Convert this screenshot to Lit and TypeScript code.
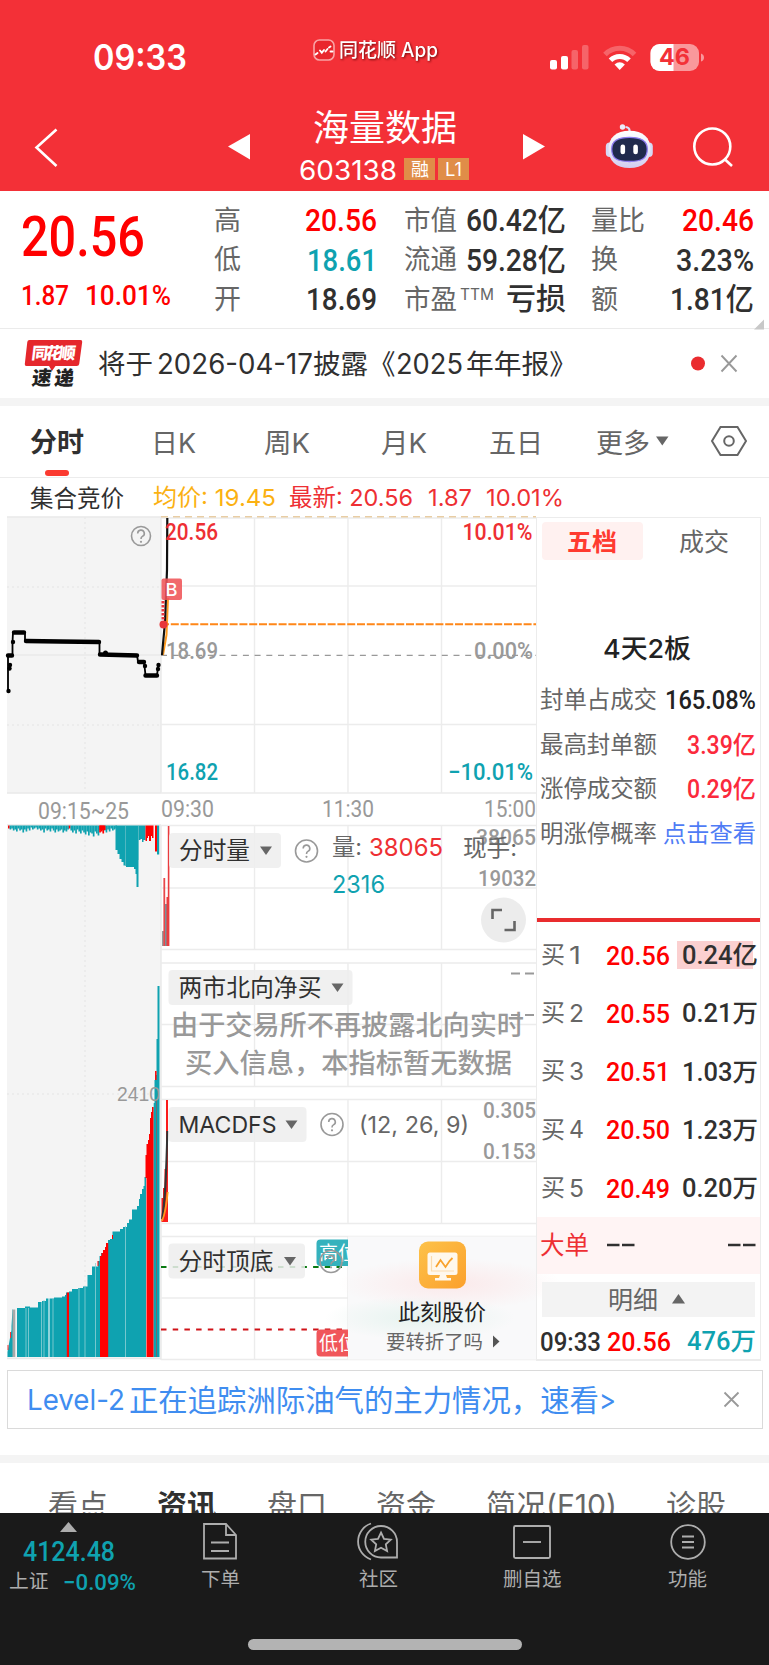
import { LitElement, html, svg, css } from "lit";
import { customElement } from "lit/decorators.js";

// One line of text set to an exact advance width, centred on its own box.
const t = (s: string, size: number, w: number, cls = "") => html`
  <svg class="t ${cls}" width=${w} height=${size} font-size=${size}>
    <text y=${size * 0.87} textLength=${w} lengthAdjust="spacingAndGlyphs">${s}</text>
  </svg>`;

// The same inside a chart: x is the left ink edge, cy the vertical middle.
const st = (s: string, x: number, cy: number, w: number, size: number, cls = "") => svg`
  <text class=${cls} x=${x - 1} y=${cy + size * 0.36} font-size=${size} textLength=${w + 2} lengthAdjust="spacingAndGlyphs">${s}</text>`;

const RED = "#ee2f33";
const TEAL = "#0fa2b0";

const help = (cx: number, cy: number, r: number) => svg`
  <circle cx=${cx} cy=${cy} r=${r} fill="none" stroke="#999" stroke-width="1.6"/>
  <path d="M${cx - 3.3} ${cy - 2.6}a3.3 3.3 0 1 1 4.7 3q-1.4 .7 -1.4 2.5" fill="none" stroke="#999" stroke-width="1.6"/>
  <circle cx=${cx} cy=${cy + 5.8} r="1.1" fill="#999"/>`;

const chip = (x: number, y: number, w: number, label: string, tw: number) => svg`
  <rect x=${x} y=${y} width=${w} height="35" rx="4" fill="#eeeeee" fill-opacity=".86"/>
  ${st(label, x + 11, y + 17.8, tw, 23.5, "ink")}
  <path d="M${x + w - 21} ${y + 13.5}h12l-6 8.500z" fill="#666"/>`;

const cols = [254.5, 348, 441.5];
const grid = (top: number, mids: number[], bottom: number) => svg`
  <g stroke="#ececec" stroke-width="1.4" fill="none">
    <path d="M161 ${top}H536M161 ${bottom}H536"/>
    ${mids.map((m) => svg`<path d="M161 ${m}H536"/>`)}
    ${cols.map((c) => svg`<path d="M${c} ${top}V${bottom}"/>`)}
  </g>`;

const steps: [number, number][] = [
  [17, 1308], [25, 1306.5], [30, 1307.5], [38, 1302], [42, 1301], [46, 1298.5], [54, 1297.5], [62, 1296.5], [65, 1295],
  [66, 1292.5], [69, 1291.5], [72, 1289], [78, 1288], [83, 1286.5], [87.5, 1275], [92, 1266.5], [98, 1261], [99.5, 1256],
  [101, 1253], [103, 1250], [105, 1247], [106, 1243], [108, 1240], [110, 1239], [112.5, 1231.5], [120, 1229], [123, 1227],
  [127, 1223], [129, 1219.5], [132, 1209.5], [137, 1206], [139, 1199], [140, 1194], [142, 1189], [143.5, 1186], [144.5, 1177],
];
const down = [
  3, 4, 3, 5, 4, 6, 3, 5, 4, 7, 4, 6, 3, 5, 2, 4, 3, 2, 4, 3, 5, 4, 7, 3, 5, 4, 6, 3, 5, 7, 4, 6, 5, 4, 7, 5, 6, 4, 3, 5, 7, 5, 8, 4, 6,
  8, 5, 7, 9, 6, 10, 7, 8, 11, 6, 8, 10, 7, 6, 8, 5, 7, 4, 6, 3, 5, 4, 3,
];
const stepPath = steps.map(([x, y], i) => `${i ? "V" + y : "M17 1357V" + y}H${steps[i + 1]?.[0] ?? 146}`).join("") + "V1357Z";

@customElement("app-root")
export class AppRoot extends LitElement {
  static styles = css`
    :host { display: block; width: 769px; height: 1665px; overflow: hidden; background: #fff; color: #303030; font-family: Inter, "Noto Sans CJK SC", sans-serif; }
    * { box-sizing: border-box; }
    svg { display: block; flex: none; overflow: visible; }
    .t text, .plot text { fill: currentColor; }
    .din { font-family: Roboto, "Noto Sans CJK SC", sans-serif; font-weight: 500; }
    .dinr { font-family: Roboto, "Noto Sans CJK SC", sans-serif; font-weight: 400; }
    .b { font-weight: 700; } .m { font-weight: 500; } .sb { font-weight: 600; }
    .red { color: #ff0000; } .up { color: #ee2f33; } .teal { color: #0fa2b0; } .gray { color: #666; } .lt { color: #999; }
    .yel { color: #fbb112; } .ink { color: #303030; } .black { color: #222; } .hot { color: #ff3b30; } .rose { color: #fb2a3c; } .link { color: #4f7cf5; } .white { color: #fff; }
    .row { display: flex; align-items: center; }

    header { height: 191px; background: #f33037; color: #fff; }
    .status { display: flex; height: 103px; padding: 37px 64px 0 93px; }
    .status .clock { width: 220px; padding-top: 3px; }
    .status .brand { display: flex; gap: 4px; width: 236px; height: 25px; align-items: center; }
    .brand .t { filter: drop-shadow(1px 1px 1px rgba(90,0,0,.8)); }
    .nav { display: flex; height: 88px; }
    .nav .mid { width: 274px; }
    .title { display: flex; justify-content: center; padding: 7px 3px 0 0; }
    .code { display: flex; align-items: center; gap: 3px; padding: 9px 0 0 50px; }
    .code > .t { margin-top: 2px; }
    .tag { display: flex; align-items: center; justify-content: center; width: 31px; height: 22px; background: #e08d48; }
    .code .tag:first-of-type { margin-left: 4px; }

    .quote { display: grid; grid-template-columns: 214px 190px 187px 178px; height: 138px; border-bottom: 1.5px solid #ebebeb; }
    .price { padding: 17px 0 0 21px; }
    .chg { display: flex; gap: 16px; margin-top: 17px; }
    .kv { padding-top: 9px; }
    .kv .row { height: 39.3px; justify-content: space-between; }
    .k1 { padding-right: 27px; } .k2 { padding-right: 25px; } .k3 { padding-right: 15px; }
    .k2 .ttm { margin: -9px auto 0 3px; }
    .fold { display: flex; justify-content: flex-end; margin-top: -4px; margin-right: -10px; height: 10px; }
    .news { display: flex; align-items: center; height: 69px; padding-left: 24px; }
    .band { height: 8px; background: #f4f4f4; }
    .tabs { display: flex; align-items: center; height: 72px; padding-left: 30px; border-bottom: 1.5px solid #ececec; }
    .tab { display: flex; align-items: center; height: 72px; margin-top: 1px; }
    .on { flex-direction: column; }
    .on .t { margin-top: 22px; }
    .bar { width: 24px; height: 6px; border-radius: 3px; background: #fb3a30; margin-top: 15px; }
    .info { display: flex; align-items: center; height: 39px; padding-left: 30px; }
    .info .t:first-child { margin-top: 3px; }
    .main { display: grid; grid-template-columns: 536px 225px; height: 844px; }
    .book { border: 1.5px solid #ececec; border-bottom-width: 2px; height: 844px; }
    .seg { display: flex; padding: 4px 0 0 5px; height: 109px; }
    .seg .act { display: flex; align-items: center; justify-content: center; width: 101px; height: 38px; border-radius: 4px; background: #fff1f0; }
    .seg .off { display: flex; align-items: center; justify-content: center; width: 113px; height: 38px; margin-left: 5px; }
    .streak { display: flex; justify-content: center; padding: 8px 4px 0 0; height: 50px; }
    .stat { display: flex; align-items: center; justify-content: space-between; height: 44.8px; padding: 0 4px 0 3px; }
    .rule { height: 3.5px; background: #e92c2e; margin-top: 62px; }
    .lvls { padding-top: 4px; }
    .lvl { display: grid; grid-template-columns: 65px 71px 81px; align-items: center; height: 58.2px; padding-left: 4px; }
    .vol { display: flex; align-items: center; justify-content: flex-end; height: 28px; }
    .vol.hit { background: linear-gradient(90deg, #fbd0d0 76px, transparent 76px); }
    .big { display: flex; align-items: center; height: 57px; padding: 0 4px 0 3px; background: #fff4f4; }
    .big .grow { margin-left: auto; }
    .more { display: flex; align-items: center; gap: 14px; height: 35px; margin: 8px 5px 0; padding-left: 66px; background: #f3f3f3; }
    .tick { display: flex; align-items: center; height: 48px; padding: 0 4px 0 3px; gap: 6px; }
    .tick .grow { margin-left: auto; }
    .ad { display: flex; align-items: center; justify-content: space-between; width: 756px; height: 59px; margin: 9px 0 0 7px; padding: 0 22px 0 19px; border: 1.5px solid #dadada; }
    .gap { height: 26px; }
    .tabs2 { display: flex; height: 49.5px; padding: 26.5px 43px 0 48px; justify-content: space-between; overflow: hidden; }
    footer { height: 153.5px; background: #1a1a1a; color: #adadad; }
    .menu { display: grid; grid-template-columns: 142px 156px 160px 148px 163px; height: 126.5px; }
    .cell { display: flex; flex-direction: column; align-items: center; padding-top: 9px; }
    .cell .t { margin-top: 9px; }
    .idx { display: flex; flex-direction: column; padding: 9px 0 0 9px; }
    .home { width: 274px; height: 11px; border-radius: 6px; background: #b3b3b3; margin-left: 248px; }
  `;

  private header() {
    return html`<header>
      <div class="status">
        <div class="clock">${t("09:33", 35, 94, "sb")}</div>
        <div class="brand">
          <svg width="22" height="22" viewBox="0 0 22 22"><rect x="1" y="1" width="20" height="20" rx="5.5" fill="#e9262d" stroke="#f9a3a5" stroke-width="1.6"/><path d="M2.500 15.500l2-1.500M7 11.500l1.800 2.200L11 11M12.500 12.500l2-2.500M16 8.500l1.500-1M17.500 12.500h2" stroke="#fff" stroke-width="1.900" fill="none" stroke-linecap="round"/></svg>
          ${t("同花顺 App", 19.5, 99, "m")}
        </div>
        <svg width="156" height="36" viewBox="550 37 156 36">
          <g fill="#fff"><rect x="551" y="60" width="7" height="9.5" rx="2"/><rect x="562" y="56" width="7" height="13.5" rx="2"/><rect x="572.5" y="50" width="6.5" height="19.5" rx="2" opacity=".25"/><rect x="583" y="45" width="6.5" height="24.500" rx="2" opacity=".25"/></g>
          <g fill="none" stroke="#fff" stroke-width="5"><path d="M606 54.500a20.500 20.500 0 0 1 29.500 0" opacity=".25"/><path d="M611.500 60.300a13 13 0 0 1 18.500 0"/></g>
          <path d="M615.500 64.500q5.200-4.500 10.400 0L620.700 70z" fill="#fff"/>
          <clipPath id="lv"><rect x="651" y="43" width="23.500" height="29"/></clipPath>
          <rect x="651.500" y="44" width="48.500" height="27" rx="9" fill="#fff" opacity=".5"/>
          <rect x="651.500" y="44" width="48.500" height="27" rx="9" fill="#fff" clip-path="url(#lv)"/>
          <path d="M702 53.500q3 1 3 4t-3 4z" fill="#fff" opacity=".5"/>
          <g fill="#f33037" class="b">${svg`<text x="660" y="65" font-size="22.500" textLength="31" lengthAdjust="spacingAndGlyphs">46</text>`}</g>
        </svg>
      </div>
      <div class="nav">
        <svg width="249" height="88" viewBox="0 103 249 88"><path d="M56.500 129.500L36.500 147.500L56.500 166" fill="none" stroke="#fff" stroke-width="2.600"/><path d="M228 146.500L250 134V159.500z" fill="#fff"/></svg>
        <div class="mid">
          <div class="title">${t("海量数据", 36, 144)}</div>
          <div class="code">${t("603138", 26.5, 98)}<span class="tag">${t("融", 18, 18)}</span><span class="tag">${t("L1", 18, 17)}</span></div>
        </div>
        <svg width="246" height="88" viewBox="523 103 246 88">
          <defs><linearGradient id="hd" x2="0" y2="1"><stop offset="0" stop-color="#fff"/><stop offset=".6" stop-color="#e4e4f6"/><stop offset="1" stop-color="#d3cdf0"/></linearGradient></defs>
          <path d="M523 134V159.500L545 146.500z" fill="#fff"/>
          <path d="M629.500 132v-1.500q0-3-4-3.500" fill="none" stroke="#dcdffa" stroke-width="2.200"/><circle cx="622.500" cy="127" r="2.700" fill="#ecebfa"/>
          <rect x="605.800" y="142.500" width="8" height="14.500" rx="4" fill="#d6d9f5"/><rect x="644.800" y="142.500" width="8" height="14.500" rx="4" fill="#d6d9f5"/>
          <path d="M629.500 130.800C643 130.800 650.500 138 650.500 149C650.500 161 643 168 629.500 168C616 168 608.500 161 608.500 149C608.500 138 616 130.800 629.500 130.800z" fill="url(#hd)"/>
          <path d="M629.500 137.300C641 137.300 647.300 140.500 647.300 149C647.300 158.500 642 161.500 629.500 161.500C617 161.500 611.700 158.500 611.700 149C611.700 140.500 618 137.300 629.500 137.300z" fill="#202a4c" stroke="#8d7cf0" stroke-width="1.300"/>
          <g fill="#fff"><rect x="620.500" y="144.500" width="4.600" height="9.800" rx="2.300"/><rect x="633.300" y="144.500" width="4.600" height="9.800" rx="2.300"/></g>
          <g fill="none" stroke="#fff" stroke-width="2.600"><circle cx="712.300" cy="146.500" r="18"/><path d="M724.500 159l7.500 7"/></g>
        </svg>
      </div>
    </header>`;
  }

  private quote() {
    return html`<section class="quote">
      <div class="price red">${t("20.56", 55.5, 124, "din")}<div class="chg">${t("1.87", 28, 48, "din")}${t("10.01%", 28, 86, "din")}</div></div>
      <div class="kv k1">
        <div class="row">${t("高", 27, 27, "gray")}${t("20.56", 30.5, 72, "din red")}</div>
        <div class="row">${t("低", 27, 27, "gray")}${t("18.61", 30.5, 70, "din teal")}</div>
        <div class="row">${t("开", 27, 27, "gray")}${t("18.69", 30.5, 71, "din")}</div>
      </div>
      <div class="kv k2">
        <div class="row">${t("市值", 27, 53, "gray")}${t("60.42亿", 30.5, 100, "din")}</div>
        <div class="row">${t("流通", 27, 53, "gray")}${t("59.28亿", 30.5, 100, "din")}</div>
        <div class="row">${t("市盈", 27, 53, "gray")}<span class="ttm">${t("TTM", 15.5, 34, "gray")}</span>${t("亏损", 30, 60, "m")}</div>
      </div>
      <div class="kv k3">
        <div class="row">${t("量比", 27, 54, "gray")}${t("20.46", 30.5, 72, "din red")}</div>
        <div class="row">${t("换", 27, 27, "gray")}${t("3.23%", 30.5, 78, "din")}</div>
        <div class="row">${t("额", 27, 27, "gray")}${t("1.81亿", 30.5, 84, "din")}</div>
        <div class="fold"><svg width="10" height="16"><path d="M10 5.500V15.500H0z" fill="#c8c8c8"/></svg></div>
      </div>
    </section>`;
  }

  private news() {
    return html`<section class="news">
      <svg width="74" height="50" viewBox="0 0 73 50">
        <path d="M5 1h51q2 0 1.700 2l-3 22q-.3 2-2.500 2H31l-3.500 5-3-5H2q-2 0-1.700-2l2.500-22Q3 1 5 1z" fill="#e5272c"/>
        <g transform="skewX(-7)" font-weight="900" font-family="Noto Sans CJK SC">
          <text x="9" y="20" font-size="16.500" textLength="44" fill="#fff">同花顺</text>
          <text x="12.500" y="46" font-size="19.500" textLength="42" fill="#222">速递</text>
        </g>
      </svg>
      ${t("将于", 27.5, 55)}<span style="width:4px"></span>${t("2026-04-17", 28, 156)}${t("披露", 27.5, 55)}${t("《", 27.5, 27.5)}${t("2025", 28, 67)}<span style="width:3px"></span>${t("年年报》", 27.5, 111)}
      <svg width="170" height="20"><circle cx="121" cy="9.500" r="7" fill="#ea2c2f"/><path d="M144.500 1.500l15 16M159.500 1.500L144.500 17.500" stroke="#999" stroke-width="1.900"/></svg>
    </section>`;
  }

  private tabs() {
    const gap = (w: number) => html`<span style="width:${w}px"></span>`;
    return html`<nav class="tabs">
      <div class="tab on">${t("分时", 27, 54, "b")}<div class="bar"></div></div>
      ${gap(67)}<div class="tab gray">${t("日K", 27, 45)}</div>
      ${gap(68)}<div class="tab gray">${t("周K", 27, 46)}</div>
      ${gap(71)}<div class="tab gray">${t("月K", 27, 46)}</div>
      ${gap(62)}<div class="tab gray">${t("五日", 27, 54)}</div>
      ${gap(53)}<div class="tab gray">${t("更多", 27, 54)}</div>
      <svg width="100" height="34"><path d="M6 11.500h12.500l-6.200 9z" fill="#666"/><path d="M70.500 2h17l8.500 14-8.500 14h-17L62 16z" fill="none" stroke="#666" stroke-width="2"/><circle cx="79" cy="16" r="4.800" fill="none" stroke="#666" stroke-width="2"/></svg>
    </nav>
    <div class="info">${t("集合竞价", 23.5, 94)}${gap(29)}${t("均价: 19.45", 23.5, 123, "yel")}${gap(13)}${t("最新: 20.56", 23.5, 124, "up")}${gap(15)}${t("1.87", 23.5, 44, "up")}${gap(14)}${t("10.01%", 23.5, 78, "up")}</div>`;
  }

  private plot() {
    return html`<svg class="plot" width="536" height="844" viewBox="0 517 536 844">
      <defs>
        <radialGradient id="g1"><stop offset="0" stop-color="#fbe9ea"/><stop offset="1" stop-color="#fbe9ea" stop-opacity="0"/></radialGradient>
        <radialGradient id="g2"><stop offset="0" stop-color="#e6f3ef"/><stop offset="1" stop-color="#e6f3ef" stop-opacity="0"/></radialGradient>
        <linearGradient id="g3" x2="1" y2="1"><stop offset="0" stop-color="#fdc249"/><stop offset="1" stop-color="#fba02c"/></linearGradient>
        <clipPath id="left"><rect x="161" y="1236" width="187" height="124"/></clipPath>
      </defs>
      <rect x="7" y="517" width="154" height="276" fill="#f4f4f4"/>
      <rect x="7" y="825" width="154" height="534" fill="#f4f4f4"/>
      <g stroke="#e9e9e9" stroke-width="1.400" fill="none">
        <path d="M85 517V793M7 587H161M7 725H161M85 825V1357M7 1094H161" stroke-dasharray="2 3"/>
        <path d="M7 655H161M7 517H161M7 793H161M7 825H161M7 1358.500H161M161 517V793M161 825V1360"/>
      </g>
      ${grid(518, [586, 724.5], 793)}${grid(825.5, [888], 949.5)}${grid(963, [1024.5], 1086.5)}${grid(1099.5, [1161.5], 1223.5)}${grid(1236.5, [1298], 1359.5)}
      <path d="M161 516.700H536" stroke="#e8cda4" stroke-width="1.400" stroke-dasharray="7 5"/>
      ${help(141, 536, 9.5)}

      <path d="M8 691V668V655H12.500V642L13 632.500H25V641L60 641.500L99.500 642V654H106L137 655L138 661.500H144L145.500 675H157L158.500 664" fill="none" stroke="#000" stroke-width="1.800"/>
      <path d="M14 632.500H24M26 641L60 641.500L99 642M100 654.500L137 655.500M139 662H144M145.500 675.500H157M8 655.500H12" fill="none" stroke="#000" stroke-width="4.400" stroke-linecap="round"/>
      <g><circle cx="8.500" cy="691" r="2.200"/><circle cx="9.500" cy="668.500" r="2.200"/><circle cx="10" cy="665" r="2.200"/><circle cx="13" cy="642" r="2.200"/><circle cx="105.500" cy="653" r="2.500"/><circle cx="145" cy="666" r="2.200"/><circle cx="158" cy="669" r="2.200"/><circle cx="158.500" cy="665" r="2.200"/></g>

      <path d="M161 655.300H536" stroke="#999" stroke-width="1.300" stroke-dasharray="6 5.700"/>
      <path d="M163 655L166.500 635L168 598" fill="none" stroke="#ff9a1e" stroke-width="2"/>
      <path d="M162 655L165 622L167 570L167.300 518" fill="none" stroke="#111" stroke-width="2.200"/>
      <path d="M163 601V620" stroke="#ee3a40" stroke-width="3" stroke-dasharray="2.500 1.500"/>
      <path d="M161 624.300H536" stroke="#ff8718" stroke-width="2" stroke-dasharray="8 1.800"/>
      <circle cx="163.500" cy="624.500" r="4" fill="#e8373a"/>
      <g class="din">
        ${st("20.56", 166, 531.5, 51, 23, "up")}${st("10.01%", 463.5, 531.5, 68, 23, "up")}
        ${st("18.69", 167, 651, 50, 23, "lt")}${st("0.00%", 475, 651, 57, 23, "lt")}
        ${st("16.82", 167, 771.5, 50, 23, "teal")}${st("−10.01%", 449, 771.5, 83, 23, "teal")}
      </g>
      <g class="dinr">${st("09:15~25", 39, 811, 89, 23, "lt")}${st("09:30", 162, 809, 51, 23, "lt")}${st("11:30", 323, 809, 50, 23, "lt")}${st("15:00", 485, 809, 50, 23, "lt")}</g>
      <rect x="161.500" y="578.500" width="20.500" height="21.500" rx="2" fill="#ef5458" fill-opacity=".88"/>
      ${st("B", 166.5, 589.5, 10, 17.5, "white m")}

      ${down.map((d, i) => svg`<rect x=${8 + i * 1.6} y="825.5" width="1.7" height=${d} fill=${i === 0 || i === 38 || (i > 56 && i < 60) ? "#ff0000" : TEAL}/>`)}
      <rect x="99.500" y="825.500" width="6" height="4.500" fill="#f00"/>
      <path d="M115.500 825.500V850H117.500V854H119.500V859H121.500V862H123.500V865.500H126V867H134V869H135.500V874H136.500V887H138.500V840H140.500V839H142V842H143.500V840H145.500V825.500Z" fill=${TEAL}/>
      <path d="M145.500 825.500V841H147V838H148V836H149V841H151V836H152V838H153.500V825.500ZM155 825.500V851.500H157V825.500Z" fill="#f00"/><rect x="157" y="825.500" width="2.200" height="29" fill=${TEAL}/>
      <path d="M125.500 826V866M138.500 826V860" stroke="#5fbcc5" stroke-width=".8"/>

      <path d="M7.500 1357V1352L10 1338L11.500 1330V1326L12.500 1309.500H13V1357z" fill=${TEAL}/><path d="M8 1350V1345M10.500 1338V1332" stroke="#f33" stroke-width="1"/>
      <rect x="12.500" y="1309.500" width="2.800" height="47.500" fill="#a9a9a9"/>
      <path d=${stepPath} fill=${TEAL}/>
      <g fill="#f00">
        <path d="M66.800 1357V1292.500H69V1357zM100 1357V1256H101.500V1253H103V1250H105V1247H106V1243H108.200V1357z"/>
        <path d="M145.500 1178V1155H146.500V1144H148V1140H149V1134H150V1118H151V1112H152V1107H153.700V1357H146.500V1178z"/>
        <path d="M112 1239V1235H113V1239zM97.500 1266V1261H98.500V1266z"/>
      </g>
      <path d="M153.700 1357V1103H154.500V1080H155.500V1075H156.500V1039H157.500V986H159.500V1357z" fill=${TEAL}/>
      <path d="M155.800 1080V1071" stroke="#f00" stroke-width="1.500"/><path d="M156.500 1100V1357" stroke="#6c6a72" stroke-width="1"/>
      <path d="M26 1308V1357M28.500 1308V1357M41.500 1302V1357M44 1300V1357M53 1298V1357M79 1288V1357M85 1287V1357M95.500 1263V1357M125.500 1226V1357" stroke="#8fd0d6" stroke-width=".8"/>
      <path d="M49 1298V1357" stroke="#e5f4f6" stroke-width="1.200"/>
      <g style="font-family:'Liberation Sans'">${st("2410", 118, 1094, 41, 20.5, "lt")}</g>

      <path d="M163 946V931" stroke="#999" stroke-width="2"/><path d="M164.300 946V878" stroke="#e8474a" stroke-width="1.800"/><path d="M166 946V904" stroke="#7c8f98" stroke-width="2"/><path d="M167.300 946V897M168.600 946V826" stroke="#ea3b3e" stroke-width="1.600"/>
      ${chip(169, 833, 112, "分时量", 69)}${help(306.5, 851, 11)}
      ${st("38065", 477, 837, 58, 22, "lt din")}${st("19032", 479, 878.5, 56, 22, "lt din")}
      ${st("量:", 333, 847, 28, 23, "gray")}${st("38065", 370, 847.5, 72, 24, "up")}${st("现手:", 464, 848, 52, 23, "gray")}${st("2316", 333, 884, 51, 24, "teal")}
      <circle cx="503.500" cy="920" r="22.500" fill="#ececec"/>
      <path d="M492.500 919V910H502M514.500 921V930H504.500" fill="none" stroke="#666" stroke-width="2.600"/>

      ${chip(168.5, 970, 184, "两市北向净买", 141)}
      <path d="M511 973.500H520M525 973.500H534M511 1015H520M525 1015H534" stroke="#999" stroke-width="1.800"/>
      ${st("由于交易所不再披露北向实时", 172, 1025.5, 351, 27, "lt m")}${st("买入信息，本指标暂无数据", 186, 1063.5, 325, 27, "lt m")}

      <path d="M161.500 1222V1198H163V1188H164.500V1169H166V1100H168V1222z" fill="#fb1c1c"/>
      <path d="M162 1219C164.500 1205 166 1190 167.300 1131" fill="none" stroke="#333" stroke-width="2"/><path d="M162 1221Q166 1212 167.700 1192" fill="none" stroke="#ff9a1e" stroke-width="1.800"/>
      ${chip(168.5, 1107, 138, "MACDFS", 96)}${help(332, 1124.5, 11)}
      ${st("(12, 26, 9)", 360, 1124.5, 108, 22.5, "gray")}
      ${st("0.305", 484, 1110.5, 51, 22, "lt din")}${st("0.153", 484, 1151.5, 51, 22, "lt din")}

      <g clip-path="url(#left)">
        <path d="M161 1267H348" stroke="#0a7a12" stroke-width="1.800" stroke-dasharray="5.500 6.200"/>
        <path d="M161 1329.500H348" stroke="#d01218" stroke-width="1.800" stroke-dasharray="5.500 6.200"/>
        <rect x="316.500" y="1239.500" width="50" height="26.500" rx="4" fill="#35b2bd"/>${st("高位", 320, 1253.5, 36, 19, "white")}
        <rect x="316.500" y="1329.500" width="50" height="27" rx="4" fill="#f0565a"/>${st("低位", 320, 1343.5, 36, 19, "white")}
        ${help(331, 1261.5, 11)}
        ${chip(168.5, 1243.5, 136.500, "分时顶底", 93)}
      </g>
      <rect x="348" y="1236.500" width="188" height="123" fill="#f9f9fa"/>
      <ellipse cx="450" cy="1284" rx="112" ry="26" fill="url(#g1)"/><ellipse cx="420" cy="1318" rx="95" ry="22" fill="url(#g2)"/>
      <rect x="419" y="1241.500" width="47" height="47" rx="9" fill="url(#g3)"/>
      <rect x="427.500" y="1252.500" width="30" height="22.500" rx="2.500" fill="#fff8ec"/><path d="M440 1275h6l1 3h4v2.500h-16V1278h4z" fill="#fff8ec"/>
      <path d="M431.500 1256V1271H454" fill="none" stroke="#fbdcae" stroke-width="1.200"/><path d="M436 1267l4.500-7 5 7 4-6 3-3" fill="none" stroke="#f9a22c" stroke-width="1.800"/>
      ${st("此刻股价", 399, 1312, 86, 22, "black")}${st("要转折了吗", 387, 1341.5, 95, 19.5, "gray")}
      <path d="M493 1335.500L499.500 1341.500L493 1347.500z" fill="#555"/>
    </svg>`;
  }

  private book() {
    const levels = [["1", "20.56", "0.24亿"], ["2", "20.55", "0.21万"], ["3", "20.51", "1.03万"], ["4", "20.50", "1.23万"], ["5", "20.49", "0.20万"]];
    return html`<aside class="book">
      <div class="seg"><div class="act hot">${t("五档", 25, 50, "b")}</div><div class="off gray">${t("成交", 25, 50)}</div></div>
      <div class="streak black">${t("4天2板", 26, 88, "m")}</div>
      <div class="stat">${t("封单占成交", 23.3, 117, "gray")}${t("165.08%", 25, 91, "din black")}</div>
      <div class="stat">${t("最高封单额", 23.3, 117, "gray")}${t("3.39亿", 25, 69, "din rose")}</div>
      <div class="stat">${t("涨停成交额", 23.3, 117, "gray")}${t("0.29亿", 25, 69, "din rose")}</div>
      <div class="stat">${t("明涨停概率", 23.3, 117, "gray")}${t("点击查看", 23.3, 93, "link")}</div>
      <div class="rule"></div>
      <div class="lvls">
        ${levels.map((l, i) => html`<div class="lvl"><div class="row gray">${t("买", 23.5, 24)}<span style="width:4px"></span>${t(l[0], 24, i ? 15 : 12)}</div>${t(l[1], 26, 64, "din red")}<div class="vol ${i ? "" : "hit"}">${t(l[2], 25, 76, "din")}</div></div>`)}
      </div>
      <div class="big">${t("大单", 24.5, 49, "up")}<svg width="50" height="4"><path d="M18 2h12.500M33 2h12.500" stroke="#303030" stroke-width="2.300"/></svg><svg class="grow" width="28" height="4"><path d="M0 2h12.500M15 2h12.500" stroke="#303030" stroke-width="2.300"/></svg></div>
      <div class="more gray">${t("明细", 25, 50)}<svg width="13" height="10"><path d="M0 9.500L6.500 0L13 9.500z" fill="#666"/></svg></div>
      <div class="tick">${t("09:33", 26, 61, "din")}${t("20.56", 26, 64, "din red")}<span class="grow">${t("476万", 25, 69, "din teal")}</span></div>
    </aside>`;
  }

  private footer() {
    return html`<footer>
      <div class="menu">
        <div class="idx teal">
          <svg width="70" height="10"><path d="M51 10L59.500 0L68 10z" fill="#adadad"/></svg>
          <div class="row" style="margin:5px 0 0 14px">${t("4124.48", 28, 92, "din")}</div>
          <div class="row" style="margin:5px 0 0 0;gap:14px;color:#adadad">${t("上证", 19.5, 39.5)}${t("−0.09%", 22.5, 73, "din teal")}</div>
        </div>
        <div class="cell"><svg width="36" height="38" viewBox="0 0 36 38" fill="none" stroke="#adadad" stroke-width="1.800"><path d="M2 2H24L34 13V36.500H2zM24 2V13H34M9 20.500H27M9 29H27"/></svg>${t("下单", 19.5, 39)}</div>
        <div class="cell"><svg width="40" height="38" viewBox="0 0 40 38" fill="none" stroke="#adadad" stroke-width="1.800"><path d="M13 1.500A19 19 0 0 0 13 37.500M23 4A16 16 0 0 1 39 20V35.500H23A15.700 15.700 0 0 1 23 4z"/><path d="M23 10.500l3 6.300 6.800.8-5 4.700 1.300 6.800-6.100-3.400-6.100 3.400 1.300-6.800-5-4.700 6.800-.8z"/></svg>${t("社区", 19.5, 39)}</div>
        <div class="cell"><svg width="40" height="38" viewBox="0 0 40 38" fill="none" stroke="#adadad" stroke-width="1.900"><rect x="2" y="4" width="36" height="32" rx="1.500"/><path d="M11 20H29"/></svg>${t("删自选", 19.5, 58.5)}</div>
        <div class="cell"><svg width="38" height="38" viewBox="0 0 38 38" fill="none" stroke="#adadad" stroke-width="1.800"><circle cx="19" cy="20" r="16.800"/><path d="M13 14.500H25M13 20H25M13 25.500H25"/></svg>${t("功能", 19.5, 39)}</div>
      </div>
      <div class="home"></div>
    </footer>`;
  }

  render() {
    return html`${this.header()}${this.quote()}${this.news()}
      <div class="band"></div>${this.tabs()}
      <div class="main">${this.plot()}${this.book()}</div>
      <div class="ad"><div class="row" style="color:#3f8df0">${t("Level-2", 29, 98)}<span style="width:4px"></span>${t("正在追踪洲际油气的主力情况，速看", 29.5, 470)}${t(">", 29, 17)}</div>
        <svg width="17" height="17"><path d="M1.500 1.500l14 14M15.500 1.500l-14 14" stroke="#999" stroke-width="1.800"/></svg></div>
      <div class="gap"></div><div class="band"></div>
      <div class="tabs2 gray">${t("看点", 30, 60)}${t("资讯", 30, 60, "b ink")}${t("盘口", 30, 60)}${t("资金", 30, 60)}${t("简况(F10)", 30, 131)}${t("诊股", 30, 60)}</div>
      ${this.footer()}`;
  }
}
